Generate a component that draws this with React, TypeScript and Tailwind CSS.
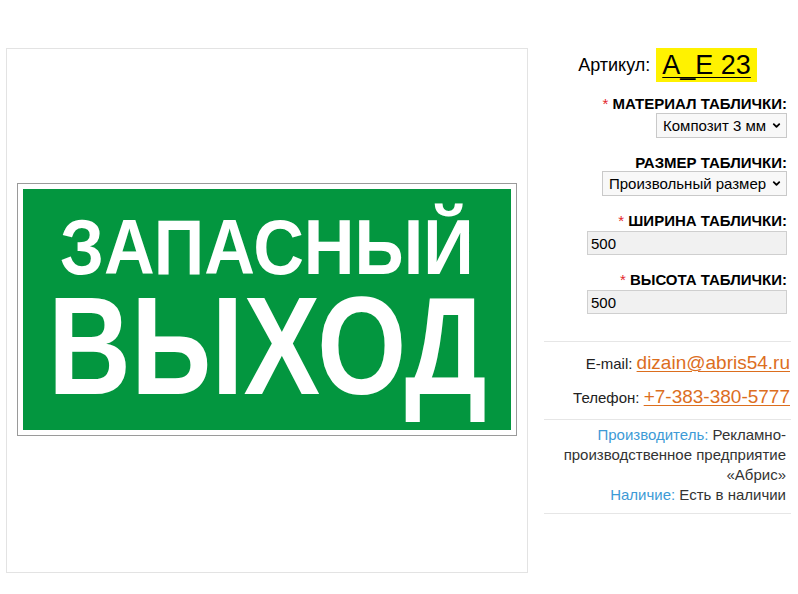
import { ChevronDown } from "lucide-react";

function FieldLabel({ text, required }: { text: string; required?: boolean }) {
  return (
    <div className="text-right text-[15px] font-bold leading-[16px] text-black">
      {required ? <span className="font-normal text-[#e3262b]">* </span> : null}
      {text}
    </div>
  );
}

function SelectBox({ value, width }: { value: string; width: string }) {
  return (
    <div className={`relative ml-auto ${width}`}>
      <select
        defaultValue={value}
        className="h-[25px] w-full appearance-none border border-[#c9c9c9] bg-[#f8f8f8] pl-[6px] pr-[20px] text-[15px] leading-[23px] text-black outline-none"
      >
        <option>{value}</option>
      </select>
      <ChevronDown
        size={11}
        strokeWidth={4}
        className="pointer-events-none absolute right-[5px] top-[7px] text-black"
      />
    </div>
  );
}

function NumberInput({ value }: { value: string }) {
  return (
    <input
      defaultValue={value}
      className="ml-auto block h-[24px] w-[200px] border border-[#cfcfcf] bg-[#f1f1f1] px-[3px] text-[15px] text-black outline-none"
    />
  );
}

export default function App() {
  return (
    <div className="flex gap-[16px] bg-white pl-[6px] pt-[48px] font-['Liberation_Sans',Arial,sans-serif] text-[#333]">
      {/* product picture */}
      <div className="flex h-[525px] w-[522px] shrink-0 items-center justify-center border border-[#e3e3e3]">
        <div className="-mt-[3px] h-[253px] w-[500px] border border-[#9a9a9a] bg-white p-[5px]">
          <div className="flex h-full w-full flex-col items-center bg-[#03963f] pt-[19px] text-white">
            <span className="inline-block scale-x-[0.9] text-[78px] font-bold leading-[78px] whitespace-nowrap">
              ЗАПАСНЫЙ
            </span>
            <span className="mt-[1px] inline-block scale-x-[0.82] text-[140px] font-bold leading-[118px] whitespace-nowrap">
              ВЫХОД
            </span>
          </div>
        </div>
      </div>

      {/* order options */}
      <div className="w-[247px] shrink-0">
        <div className="flex h-[34px] items-center justify-center gap-[6px]">
          <span className="text-[18px] text-black">Артикул:</span>
          <span className="flex h-[34px] items-center bg-[#fff200] px-[6px] text-[27px] leading-none text-black underline decoration-1 underline-offset-[3px]">
            А_Е 23
          </span>
        </div>

        <div className="pr-[4px]">
          <div className="mt-[14px]">
            <FieldLabel text="МАТЕРИАЛ ТАБЛИЧКИ:" required />
            <div className="mt-[1px]">
              <SelectBox value="Композит 3 мм" width="w-[131px]" />
            </div>
          </div>

          <div className="mt-[17px]">
            <FieldLabel text="РАЗМЕР ТАБЛИЧКИ:" />
            <SelectBox value="Произвольный размер" width="w-[185px]" />
          </div>

          <div className="mt-[17px]">
            <FieldLabel text="ШИРИНА ТАБЛИЧКИ:" required />
            <div className="mt-[2px]">
              <NumberInput value="500" />
            </div>
          </div>

          <div className="mt-[17px]">
            <FieldLabel text="ВЫСОТА ТАБЛИЧКИ:" required />
            <div className="mt-[2px]">
              <NumberInput value="500" />
            </div>
          </div>
        </div>

        <div className="mt-[27px] flex flex-col gap-[7px] border-t border-[#e6e6e6] py-[8px] pr-[1px] text-right">
          <div className="text-[15px] leading-[26px] text-[#222]">
            E-mail:{" "}
            <a href="#" className="text-[19px] text-[#dc6e1e] underline decoration-1 underline-offset-2">
              dizain@abris54.ru
            </a>
          </div>
          <div className="text-[15px] leading-[26px] text-[#222]">
            Телефон:{" "}
            <a href="#" className="text-[19px] text-[#dc6e1e] underline decoration-1 underline-offset-2">
              +7-383-380-5777
            </a>
          </div>
        </div>

        <div className="border-t border-b border-[#e6e6e6] pb-[8px] pt-[5px] pr-[5px] text-right text-[15px] leading-[20px] text-[#333]">
          <div>
            <span className="text-[#3d9ad6]">Производитель:</span> Рекламно-производственное предприятие «Абрис»
          </div>
          <div>
            <span className="text-[#3d9ad6]">Наличие:</span> Есть в наличии
          </div>
        </div>
      </div>
    </div>
  );
}
